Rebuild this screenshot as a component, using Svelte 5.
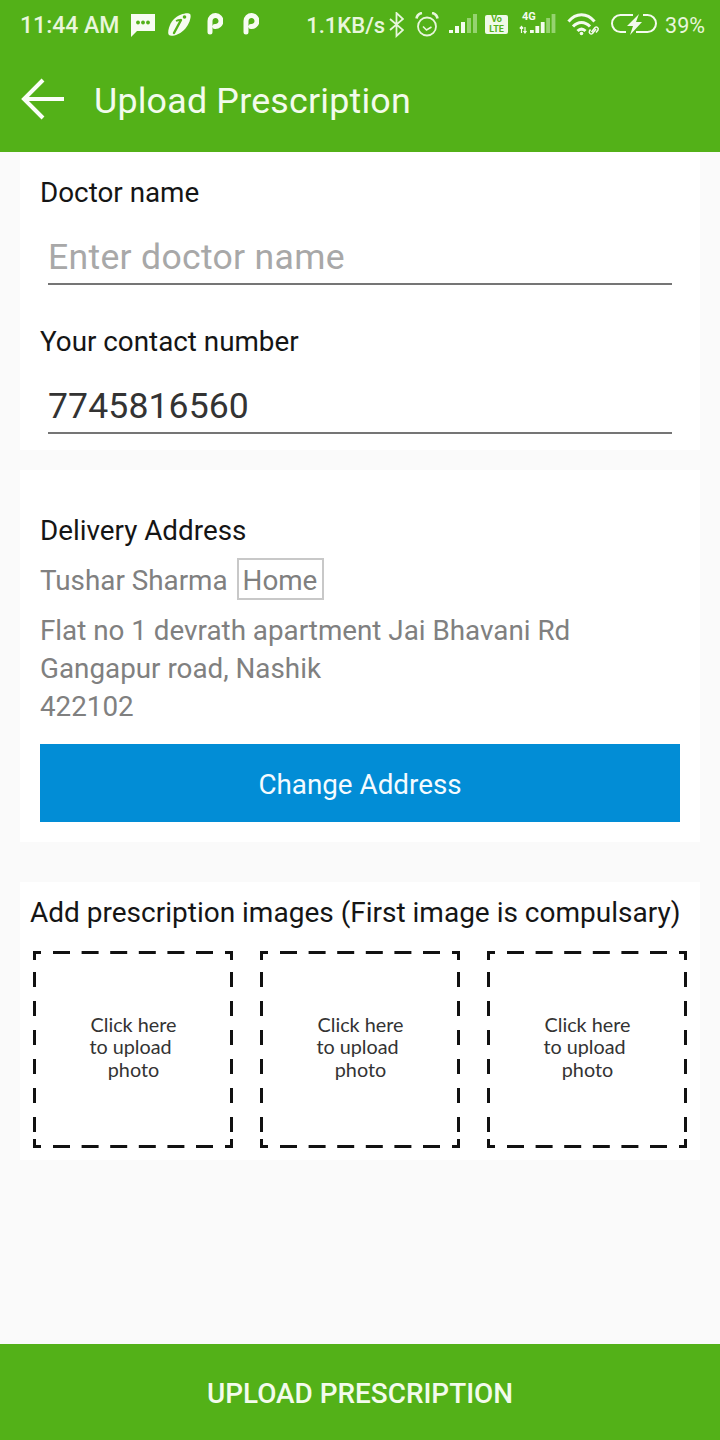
<script>
	const address = ['Flat no 1 devrath apartment Jai Bhavani Rd', 'Gangapur road, Nashik', '422102'];
	const slots = [0, 1, 2];
	const bars = [3, 7, 11, 15, 19];
	// dash offsets along the slot edges, read off the reference
	const hDash = [20, 48.6, 77.2, 105.8, 134.4, 163];
	const vDash = [21, 50, 79, 108, 137, 166];
</script>

<div class="page">
	<header class="appbar">
		<div class="status">
			<div class="status-left">
				<span class="time">11:44 AM</span>
				<svg class="msg" width="26" height="26" viewBox="0 0 26 26">
					<path d="M1 2h24v17H7l-6 6z" fill="#f7fcf2" />
					<circle cx="8" cy="10.500" r="1.900" fill="#53b118" />
					<circle cx="13" cy="10.500" r="1.900" fill="#53b118" />
					<circle cx="18" cy="10.500" r="1.900" fill="#53b118" />
				</svg>
				<svg class="leaf" width="24" height="26" viewBox="0 0 24 26">
					<path d="M7 7C12 2 21 0 23 2s-1 11-6 16-13 7-15 5S2 12 7 7z" fill="#f7fcf2" />
					<path d="M14 8L7 21" stroke="#53b118" stroke-width="2.400" stroke-linecap="round" />
					<path d="M9 9c1.500-.8 3-1 5-1" stroke="#53b118" stroke-width="1.800" fill="none" />
					<circle cx="17.500" cy="5" r="1.800" fill="#53b118" />
				</svg>
				<svg class="pee first" width="16" height="26" viewBox="0 0 16 26">
					<path d="M3 20V9a5.500 5.500 0 1 1 5 5.500" fill="none" stroke="#f7fcf2" stroke-width="5" stroke-linecap="round" />
				</svg>
				<svg class="pee" width="16" height="26" viewBox="0 0 16 26">
					<path d="M3 20V9a5.500 5.500 0 1 1 5 5.500" fill="none" stroke="#f7fcf2" stroke-width="5" stroke-linecap="round" />
				</svg>
			</div>
			<div class="status-right">
				<span class="speed">1.1KB/s</span>
				<svg class="bt" width="15" height="26" viewBox="0 0 15 26">
					<path d="M1 7l13 11-6.500 6V1L14 7 1 18" fill="none" stroke="#e8f6dc" stroke-width="1.800" />
				</svg>
				<svg class="alarm" width="24" height="26" viewBox="0 0 24 26" fill="none" stroke="#e8f6dc">
					<circle cx="12" cy="14.500" r="9" stroke-width="1.800" />
					<path d="M8 14.500l3.500 3.500 5-3" stroke-width="1.600" />
					<path d="M1.500 6.500C2 3.500 4 1.500 7 1M22.500 6.500C22 3.500 20 1.500 17 1" stroke-width="2.600" />
				</svg>
				<svg class="signal" width="28" height="26" viewBox="0 0 28 26">
					{#each bars as h, i}
						<rect x={i * 6} y={21 - h} width="4" height={h} fill={i < 3 ? '#f4fbee' : '#96d370'} />
					{/each}
				</svg>
				<span class="volte">Vo<br />LTE</span>
				<svg class="net" width="38" height="30" viewBox="0 -2 38 30">
					<text x="3" y="8" class="four-g">4G</text>
					<path d="M2.500 21v-6M.8 16.500l1.700-2 1.700 2M6 15v6M4.500 19l1.500 2 1.500-2" stroke="#f4fbee" stroke-width="1.200" fill="none" />
					{#each bars as h, i}
						<rect x={11 + i * 5.400} y={21 - h} width="3.800" height={h} fill={i < 3 ? '#f4fbee' : '#96d370'} />
					{/each}
				</svg>
				<svg class="wifi" width="34" height="26" viewBox="0 0 34 26" fill="none" stroke="#f4fbee" stroke-width="3">
					<path d="M1.500 9.500C9 .5 20 .5 27.500 9.500M6 14.500C11 9 18 9 23 14.500M10.500 19c2.500-2.500 5.500-2.500 8 0" />
					<circle cx="14.500" cy="21.500" r="1.800" fill="#f4fbee" stroke="none" />
					<path d="M24.500 20l3.500-4.500a2 2 0 0 1 3 2.500L29 20.500M29 17l-3.500 4.500a2 2 0 0 1-3-2.500l1-1.500" stroke-width="1.500" />
				</svg>
				<svg class="battery" width="48" height="26" viewBox="0 0 48 26" fill="none" stroke="#f4fbee" stroke-width="2">
					<path d="M22 3H9.500a8.500 8.500 0 0 0 0 17H15M25 20h11.500a8.500 8.500 0 0 0 0-17H32" />
					<path d="M28 2L16 14h6l-3 9 12-13h-6z" fill="#f4fbee" stroke="none" />
				</svg>
				<span class="pct">39%</span>
			</div>
		</div>
		<div class="toolbar">
			<svg width="46" height="44" viewBox="0 0 46 44" fill="none" stroke="#fbfef8" stroke-width="4">
				<path d="M4 22h40M23 3L4 22l19 19" />
			</svg>
			<h1>Upload Prescription</h1>
		</div>
	</header>

	<main>
		<section class="card contact">
			<label class="field-label" for="doctor">Doctor name</label>
			<input id="doctor" class="field" placeholder="Enter doctor name" />
			<label class="field-label second" for="phone">Your contact number</label>
			<input id="phone" class="field" value="7745816560" />
		</section>

		<section class="card delivery">
			<h2>Delivery Address</h2>
			<div class="name-row">
				<span class="who">Tushar Sharma</span>
				<span class="tag">Home</span>
			</div>
			<div class="lines">
				{#each address as line}
					<div>{line}</div>
				{/each}
			</div>
			<button class="change">Change Address</button>
		</section>

		<section class="card images">
			<h2>Add prescription images (First image is compulsary)</h2>
			<div class="slots">
				{#each slots as s}
					<div class="slot">
						<svg class="dash" width="200" height="197" viewBox="0 0 200 197" fill="none" stroke="#111" stroke-width="3">
							<path d="M1.500 9V1.500H8M192 1.500H198.500V9M1.500 188V195.500H8M192 195.500H198.500V188" />
							{#each hDash as x}
								<path d={`M${x} 1.500h17M${x} 195.500h17`} />
							{/each}
							{#each vDash as y}
								<path d={`M1.500 ${y}v15M198.500 ${y}v15`} />
							{/each}
						</svg>
						<div class="hint">
							<div>Click here</div>
							<div class="shift">to upload</div>
							<div>photo</div>
						</div>
					</div>
				{/each}
			</div>
		</section>
	</main>

	<button class="upload">UPLOAD PRESCRIPTION</button>
</div>

<style>
	:global(body) {
		background: #fafafa;
		font-family: Roboto, sans-serif;
	}
	.page {
		width: 720px;
		height: 1440px;
		display: flex;
		flex-direction: column;
		overflow: hidden;
	}
	.appbar {
		height: 152px;
		background: #53b118;
		flex: none;
	}
	.status {
		height: 50px;
		display: flex;
		justify-content: space-between;
		align-items: center;
		padding: 0 15px 0 20px;
		color: #e8f6dc;
		font-size: 22px;
		font-weight: 500;
	}
	.status-left,
	.status-right {
		display: flex;
		align-items: center;
	}
	.time {
		font-size: 23px;
	}
	.msg {
		margin-left: 11px;
	}
	.leaf {
		margin-left: 11px;
	}
	.pee {
		margin-left: 20px;
	}
	.pee.first {
		margin-left: 16px;
	}
	.bt {
		margin-left: 4px;
	}
	.alarm {
		margin-left: 11px;
	}
	.signal {
		margin-left: 10px;
	}
	.volte {
		width: 23px;
		height: 19px;
		background: #f0f9e8;
		color: #53b118;
		font-size: 9px;
		line-height: 9.500px;
		font-weight: 700;
		text-align: center;
		border-radius: 2px;
		margin: 0 0 1px 8px;
	}
	.net {
		margin-left: 11px;
	}
	.four-g {
		font-size: 11px;
		font-weight: 700;
		fill: #f4fbee;
	}
	.wifi {
		margin-left: 10px;
	}
	.battery {
		margin-left: 10px;
	}
	.pct {
		font-size: 21.500px;
		font-weight: 400;
		margin-left: 6px;
	}
	.toolbar {
		height: 102px;
		display: flex;
		align-items: center;
		padding-left: 20px;
		gap: 28px;
	}
	.toolbar svg {
		flex: none;
		margin-bottom: 4px;
	}
	h1 {
		margin: 0;
		font-size: 35.800px;
		font-weight: 400;
		color: #f3fbec;
		letter-spacing: 0.2px;
	}
	main {
		flex: 1;
		padding: 0 20px;
	}
	.card {
		background: #fff;
	}
	.contact {
		height: 298px;
		padding: 24px 20px 0;
		box-sizing: border-box;
	}
	.field-label {
		display: block;
		font-size: 27.800px;
		line-height: 34px;
		color: #151515;
	}
	.field-label.second {
		margin-top: 40px;
	}
	.field {
		display: block;
		width: 624px;
		height: 53px;
		margin: 20px 0 0 8px;
		padding: 0;
		border: 0;
		border-bottom: 2px solid #757575;
		outline: none;
		background: transparent;
		font: 400 35.600px Roboto, sans-serif;
		color: #333;
		letter-spacing: 0.1px;
		box-sizing: content-box;
	}
	.field::placeholder {
		color: #a8a8a8;
		opacity: 1;
		letter-spacing: 0.3px;
	}
	.delivery {
		margin-top: 20px;
		height: 372px;
		padding: 44px 20px 0;
		box-sizing: border-box;
	}
	.delivery h2 {
		margin: 0;
		font-size: 27.800px;
		font-weight: 400;
		line-height: 34px;
		color: #151515;
	}
	.name-row {
		display: flex;
		align-items: center;
		gap: 9px;
		margin-top: 10px;
		font-size: 27.800px;
		color: #808080;
	}
	.who {
		padding-top: 2px;
	}
	.tag {
		border: 2px solid #c8c8c8;
		padding: 0 5px 0 4px;
		height: 38px;
		line-height: 42px;
	}
	.lines {
		margin-top: 12px;
		font-size: 27.800px;
		line-height: 38px;
		color: #808080;
	}
	.change {
		display: block;
		width: 640px;
		height: 78px;
		margin-top: 18px;
		padding: 2px 0 0;
		border: 0;
		background: #028dd6;
		color: #f4fbff;
		font: 400 27.800px Roboto, sans-serif;
	}
	.images {
		margin-top: 40px;
		height: 278px;
		padding: 15px 10px 0;
		box-sizing: border-box;
	}
	.images h2 {
		margin: 0;
		font-size: 28px;
		font-weight: 400;
		line-height: 32px;
		color: #151515;
		white-space: nowrap;
	}
	.slots {
		display: flex;
		gap: 27px;
		margin: 22px 0 0 3px;
	}
	.slot {
		position: relative;
		width: 200px;
		height: 197px;
	}
	.dash {
		display: block;
	}
	.hint {
		position: absolute;
		inset: 62px 0 0 1px;
		text-align: center;
		font: 400 19.800px/22.300px Lato, sans-serif;
		color: #333;
	}
	.shift {
		margin-right: 6px;
	}
	.upload {
		flex: none;
		height: 96px;
		border: 0;
		background: #53b118;
		color: #f3fbec;
		font: 500 27.900px Roboto, sans-serif;
		padding: 2px 0 0;
	}
</style>
